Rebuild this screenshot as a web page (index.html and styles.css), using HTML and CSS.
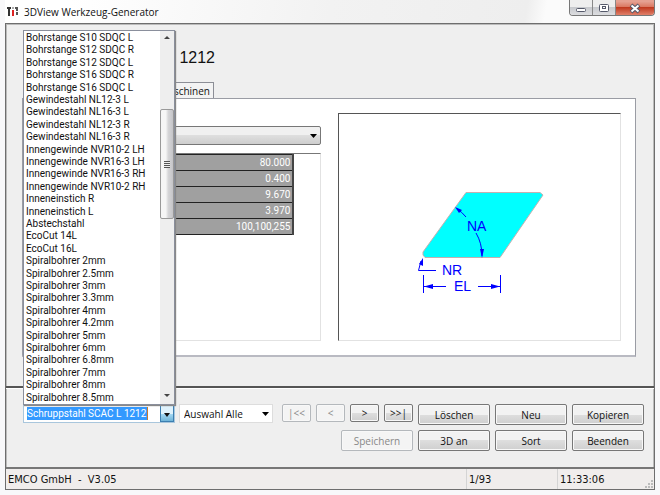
FILE: index.html
```html
<!DOCTYPE html>
<html lang="de">
<head>
  <meta charset="UTF-8">
  <meta name="viewport" content="width=device-width, initial-scale=1.0">
  <title>3DView Werkzeug-Generator</title>
  <link rel="stylesheet" href="styles.css">
</head>
<body>
  <header class="titlebar">
    <svg width="12" height="12" viewBox="0 0 12 12" aria-hidden="true">
      <path d="M0 2h4M2 2v8" stroke="#333" stroke-width="2" fill="none"/>
      <path d="M6 4v6" stroke="#d22" stroke-width="2"/>
      <path d="M6 1v2" stroke="#555"/>
      <path d="M8 2h4M10 2v8" stroke="#555" stroke-width="2" stroke-dasharray="3 1"/>
    </svg>
    <span class="title">3DView Werkzeug-Generator</span>
    <div class="window-buttons">
      <button class="win-btn" aria-label="Minimieren">
        <svg width="12" height="12" viewBox="0 0 12 12"><rect x="1.5" y="6.5" width="9" height="3" rx="1" fill="#fff" stroke="#55596a"/></svg>
      </button>
      <button class="win-btn" aria-label="Maximieren">
        <svg width="12" height="12" viewBox="0 0 12 12"><rect x="1.5" y="2.5" width="9" height="7" rx="1" fill="#fff" stroke="#55596a"/><rect x="4.5" y="4.5" width="3" height="2" fill="#fff" stroke="#55596a"/></svg>
      </button>
      <button class="win-btn win-close" aria-label="Schließen">
        <svg width="12" height="12" viewBox="0 0 12 12"><path d="M2 3l8 7M10 3l-8 7" stroke="#55596a" stroke-width="4"/><path d="M2.5 3.5l7 6M9.5 3.5l-7 6" stroke="#fff" stroke-width="2"/></svg>
      </button>
    </div>
  </header>

  <div class="window">
    <main class="content">
      <h1>1212</h1>
      <div class="tabs">
        <button class="tab">Maschinen</button>
      </div>
      <section class="panel">
        <div class="params">
          <select class="type-select" aria-label="Typ"><option></option></select>
          <div class="param-box">
            <table>
              <tbody>
                <tr><td>80.000</td></tr>
                <tr><td>0.400</td></tr>
                <tr><td>9.670</td></tr>
                <tr><td>3.970</td></tr>
                <tr><td>100,100,255</td></tr>
              </tbody>
            </table>
          </div>
        </div>
        <div class="preview">
          <svg width="160" height="120" viewBox="400 180 160 120">
            <path d="M466 193.500H540L543 196L500 258.500H425L423 256V253Z" fill="#00ffff" stroke="#c4b0b0"/>
            <g fill="none" stroke="#0000ff">
              <path d="M457 210Q462 213 466 218M476 234Q482 244 482 257"/>
              <path d="M436 271.500H418.500L421 262"/>
              <path d="M423.500 276V294M500.500 276V294M424 287.500H446M478 287.500H500"/>
            </g>
            <g fill="#0000ff">
              <path d="M455 208L462 211L459 214Z"/>
              <path d="M482 259L480 250H484Z"/>
              <path d="M423 259L419 265L423 267Z"/>
              <path d="M424 287.500L433 285V290Z"/>
              <path d="M500 287.500L491 285V290Z"/>
            </g>
            <g class="dims">
              <text x="467" y="232">NA</text>
              <text x="442" y="276">NR</text>
              <text x="454" y="292">EL</text>
            </g>
          </svg>
        </div>
      </section>
    </main>

    <footer class="controls">
      <div class="combo">
        <select class="combo-value" aria-label="Werkzeug"><option>Schruppstahl SCAC L 1212</option></select>
        <span class="combo-arrow"></span>
        <div class="popup">
          <ul class="tool-list" role="listbox" aria-label="Werkzeuge">
            <li role="option">Bohrstange S10 SDQC L</li>
            <li role="option">Bohrstange S12 SDQC R</li>
            <li role="option">Bohrstange S12 SDQC L</li>
            <li role="option">Bohrstange S16 SDQC R</li>
            <li role="option">Bohrstange S16 SDQC L</li>
            <li role="option">Gewindestahl NL12-3 L</li>
            <li role="option">Gewindestahl NL16-3 L</li>
            <li role="option">Gewindestahl NL12-3 R</li>
            <li role="option">Gewindestahl NL16-3 R</li>
            <li role="option">Innengewinde NVR10-2 LH</li>
            <li role="option">Innengewinde NVR16-3 LH</li>
            <li role="option">Innengewinde NVR16-3 RH</li>
            <li role="option">Innengewinde NVR10-2 RH</li>
            <li role="option">Inneneinstich R</li>
            <li role="option">Inneneinstich L</li>
            <li role="option">Abstechstahl</li>
            <li role="option">EcoCut 14L</li>
            <li role="option">EcoCut 16L</li>
            <li role="option">Spiralbohrer 2mm</li>
            <li role="option">Spiralbohrer 2.5mm</li>
            <li role="option">Spiralbohrer 3mm</li>
            <li role="option">Spiralbohrer 3.3mm</li>
            <li role="option">Spiralbohrer 4mm</li>
            <li role="option">Spiralbohrer 4.2mm</li>
            <li role="option">Spiralbohrer 5mm</li>
            <li role="option">Spiralbohrer 6mm</li>
            <li role="option">Spiralbohrer 6.8mm</li>
            <li role="option">Spiralbohrer 7mm</li>
            <li role="option">Spiralbohrer 8mm</li>
            <li role="option">Spiralbohrer 8.5mm</li>
          </ul>
          <div class="scrollbar">
            <span class="scroll-up"></span>
            <span class="scroll-thumb"></span>
            <span class="scroll-down"></span>
          </div>
        </div>
      </div>
      <select class="filter" aria-label="Auswahl"><option>Auswahl Alle</option></select>
      <div class="nav">
        <button disabled>|&lt;&lt;</button>
        <button disabled>&lt;</button>
        <button>&gt;</button>
        <button>&gt;&gt;|</button>
        <button class="save" disabled>Speichern</button>
      </div>
      <div class="actions">
        <button>Löschen</button>
        <button>Neu</button>
        <button>Kopieren</button>
        <button>3D an</button>
        <button>Sort</button>
        <button>Beenden</button>
      </div>
    </footer>

    <div class="statusbar">
      <span class="status-app">EMCO GmbH &nbsp;- &nbsp;V3.05</span>
      <span class="status-count">1/93</span>
      <span class="status-time">11:33:06</span>
      <svg class="grip" width="8" height="8" viewBox="0 0 8 8" aria-hidden="true"><path d="M6 0h2v2h-2zM3 3h2v2h-2zM6 3h2v2h-2zM0 6h2v2h-2zM3 6h2v2h-2zM6 6h2v2h-2z" fill="#bbb"/></svg>
    </div>
  </div>
</body>
</html>
```

FILE: styles.css
```css
* {
  box-sizing: border-box;
}
body {
  margin: 0;
  min-height: 100vh;
  padding: 0 5px 5px;
  display: flex;
  flex-direction: column;
  font-family: "Open Sans", "Noto Sans", sans-serif;
  font-size: 10px;
  color: #111;
  background: #f8f8fa;
}
button, select {
  font: inherit;
  color: inherit;
}

/* title bar */
.titlebar {
  height: 23px;
  display: flex;
  align-items: center;
  gap: 5px;
  padding-left: 2px;
  background: linear-gradient(100deg, #fff 10%, #f2f2f2 50%, #eee 80%, #fbfbfb 83%);
}
.window-buttons {
  display: flex;
  align-self: flex-start;
  margin-left: auto;
  border: 1px solid #777;
  border-top: 0;
  border-radius: 0 0 4px 4px;
  overflow: hidden;
}
.win-btn {
  width: 23px;
  height: 15px;
  padding: 0;
  border: 0;
  border-right: 1px solid #888;
  display: flex;
  align-items: center;
  justify-content: center;
  background: linear-gradient(#eee 50%, #c8cace 50%, #dcdde0);
}
.win-close {
  width: 38px;
  border-right: 0;
  background: linear-gradient(#e5a091 10%, #d9735c 50%, #c03a20 50%, #e0806a);
}

/* window frame */
.window {
  flex: 1;
  display: flex;
  flex-direction: column;
  border: 1px solid #6e6e6e;
  box-shadow: inset 0 0 0 1px #bbb;
  background: #efefef;
}
.content {
  flex: 1;
  display: flex;
  flex-direction: column;
  padding: 24px 18px 29px 16px;
}
h1 {
  width: 193px;
  margin: 0;
  font: 16px/20px "Liberation Sans", Arial, sans-serif;
  text-align: right;
}
.tabs {
  display: flex;
  justify-content: flex-end;
  width: 192px;
  margin-top: 14px;
}
.tab {
  height: 16px;
  padding: 0 3px;
  line-height: 14px;
  border: 1px solid #8c8e96;
  border-bottom: 0;
  background: #f3f3f3;
}
.panel {
  flex: 1;
  display: grid;
  grid-template-columns: 289fr 283fr;
  gap: 17px;
  padding: 14px;
  padding-left: 10px;
  border: 1px solid #9a9ca4;
  border-bottom: 2px solid #b9bac2;
  background: #fff;
}
.params {
  display: flex;
  flex-direction: column;
  padding-top: 13px;
  gap: 8px;
}
.type-select {
  appearance: none;
  height: 19px;
  border: 1px solid #777;
  border-radius: 2px;
  background: url("data:image/svg+xml,%3Csvg xmlns='http://www.w3.org/2000/svg' width='8' height='4'%3E%3Cpath d='M0 0h7l-3.5 4z'/%3E%3C/svg%3E") no-repeat right 2px center, linear-gradient(#f0f0f0 50%, #dedede 50%, #cecece);
}
.param-box {
  flex: 1;
  border: 1px solid #e2e2e2;
  border-top-color: #777;
  padding-right: 26px;
}
table {
  width: 100%;
  border-collapse: collapse;
}
td {
  height: 16px;
  padding: 0 2px;
  font-family: Roboto, sans-serif;
  line-height: 14px;
  text-align: right;
  color: #fff;
  background: #a0a0a0;
  border: 1px solid #222;
  border-right: 2px solid #444;
}
.preview {
  display: flex;
  align-items: center;
  justify-content: center;
  padding-top: 24px;
  border: 1px solid #e2e2e2;
  border-top-color: #555;
  border-left-color: #555;
}
.dims text {
  font-family: "Liberation Sans", Arial, sans-serif;
  font-size: 14px;
  fill: #0000ff;
}

/* lower controls */
.controls {
  display: flex;
  align-items: flex-start;
  padding: 16px 10px 16px 17px;
  border-top: 2px solid #555;
  box-shadow: inset 0 1px #fff;
}
.combo {
  position: relative;
  display: flex;
  width: 152px;
  height: 19px;
  border: 1px solid #a9c6dc;
  background: #fff;
}
.combo-value {
  appearance: none;
  height: 13px;
  margin: 2px auto 2px 3px;
  padding: 0;
  border: 0;
  border-right: 1px solid #c77a30;
  font-family: Roboto, sans-serif;
  line-height: 13px;
  color: #fff;
  background: #3399ff;
}
.combo-arrow {
  width: 14px;
  border: 1px solid #3c7fb1;
  background: linear-gradient(#dff2fc 50%, #a9dbf5 50%, #6fb4d8);
}
.combo-arrow::after, .scroll-down::after, .scroll-up::after {
  content: "";
  display: block;
  margin: 7px auto 0;
  width: 0;
  border: 3px solid transparent;
  border-top: 4px solid #111;
  border-bottom: 0;
}
.popup {
  position: absolute;
  left: -1px;
  bottom: 17px;
  width: 152px;
  height: 375px;
  display: flex;
  border: 1px solid #8a8f9c;
  background: #fff;
  box-shadow: 1px 1px 1px #888;
}
.tool-list {
  flex: 1;
  display: grid;
  grid-auto-rows: 1fr;
  margin: 0;
  padding: 1px 0 0 2px;
  list-style: none;
  font-family: Roboto, sans-serif;
  line-height: 12px;
  white-space: nowrap;
}
.scrollbar {
  width: 14px;
  display: flex;
  flex-direction: column;
  background: #eee;
}
.scroll-up {
  height: 78px;
}
.scroll-up::after {
  margin-top: 5px;
  border-top: 0;
  border-bottom: 3px solid #444;
}
.scroll-thumb {
  height: 110px;
  border: 1px solid #999;
  border-radius: 2px;
  background:
    repeating-linear-gradient(#555 0 1px, #eee 1px 2px) center / 6px 7px no-repeat,
    linear-gradient(90deg, #f6f6f6 40%, #d6d6d8 60%, #c4c4c8);
}
.scroll-down {
  margin-top: auto;
  height: 17px;
}
.scroll-down::after {
  border-top: 3px solid #444;
}
.filter {
  appearance: none;
  width: 94px;
  height: 19px;
  margin-left: 4px;
  padding: 0 4px;
  border: 1px solid #ddd;
  background: #fff url("data:image/svg+xml,%3Csvg xmlns='http://www.w3.org/2000/svg' width='8' height='4'%3E%3Cpath d='M0 0h7l-3.5 4z'/%3E%3C/svg%3E") no-repeat right 2px center;
}
.nav {
  display: grid;
  grid-template-columns: repeat(4, 29px);
  gap: 8px 5px;
  margin-left: auto;
  margin-right: 5px;
}
.nav button {
  height: 18px;
}
.actions {
  display: grid;
  grid-template-columns: repeat(3, 72px);
  gap: 5px;
}
.nav button, .actions button {
  padding: 0;
  border: 1px solid #777;
  border-radius: 2px;
  box-shadow: inset 0 0 0 1px #f8f8f8;
  background: linear-gradient(#f2f2f2 50%, #dedede 50%, #cfcfcf);
}
.actions button {
  height: 21px;
}
.nav .save {
  grid-column: 2 / 5;
  justify-self: end;
  width: 72px;
  height: 21px;
}
.nav button:disabled {
  color: #888;
  border-color: #b4b8bc;
  background: #f4f4f4;
}

/* status bar */
.statusbar {
  display: flex;
  height: 22px;
  border-top: 2px solid #777;
  line-height: 22px;
  font-family: "DejaVu Sans Condensed", "DejaVu Sans", sans-serif;
  font-size: 11px;
  background: #f0edec;
}
.statusbar span {
  padding-left: 2px;
}
.status-app {
  flex: 1;
}
.status-count {
  width: 91px;
  border-left: 1px solid #d4d4d4;
}
.status-time {
  width: 88px;
  border-left: 1px solid #d4d4d4;
}
.grip {
  align-self: flex-end;
  margin: 0 1px 1px 0;
}
```
